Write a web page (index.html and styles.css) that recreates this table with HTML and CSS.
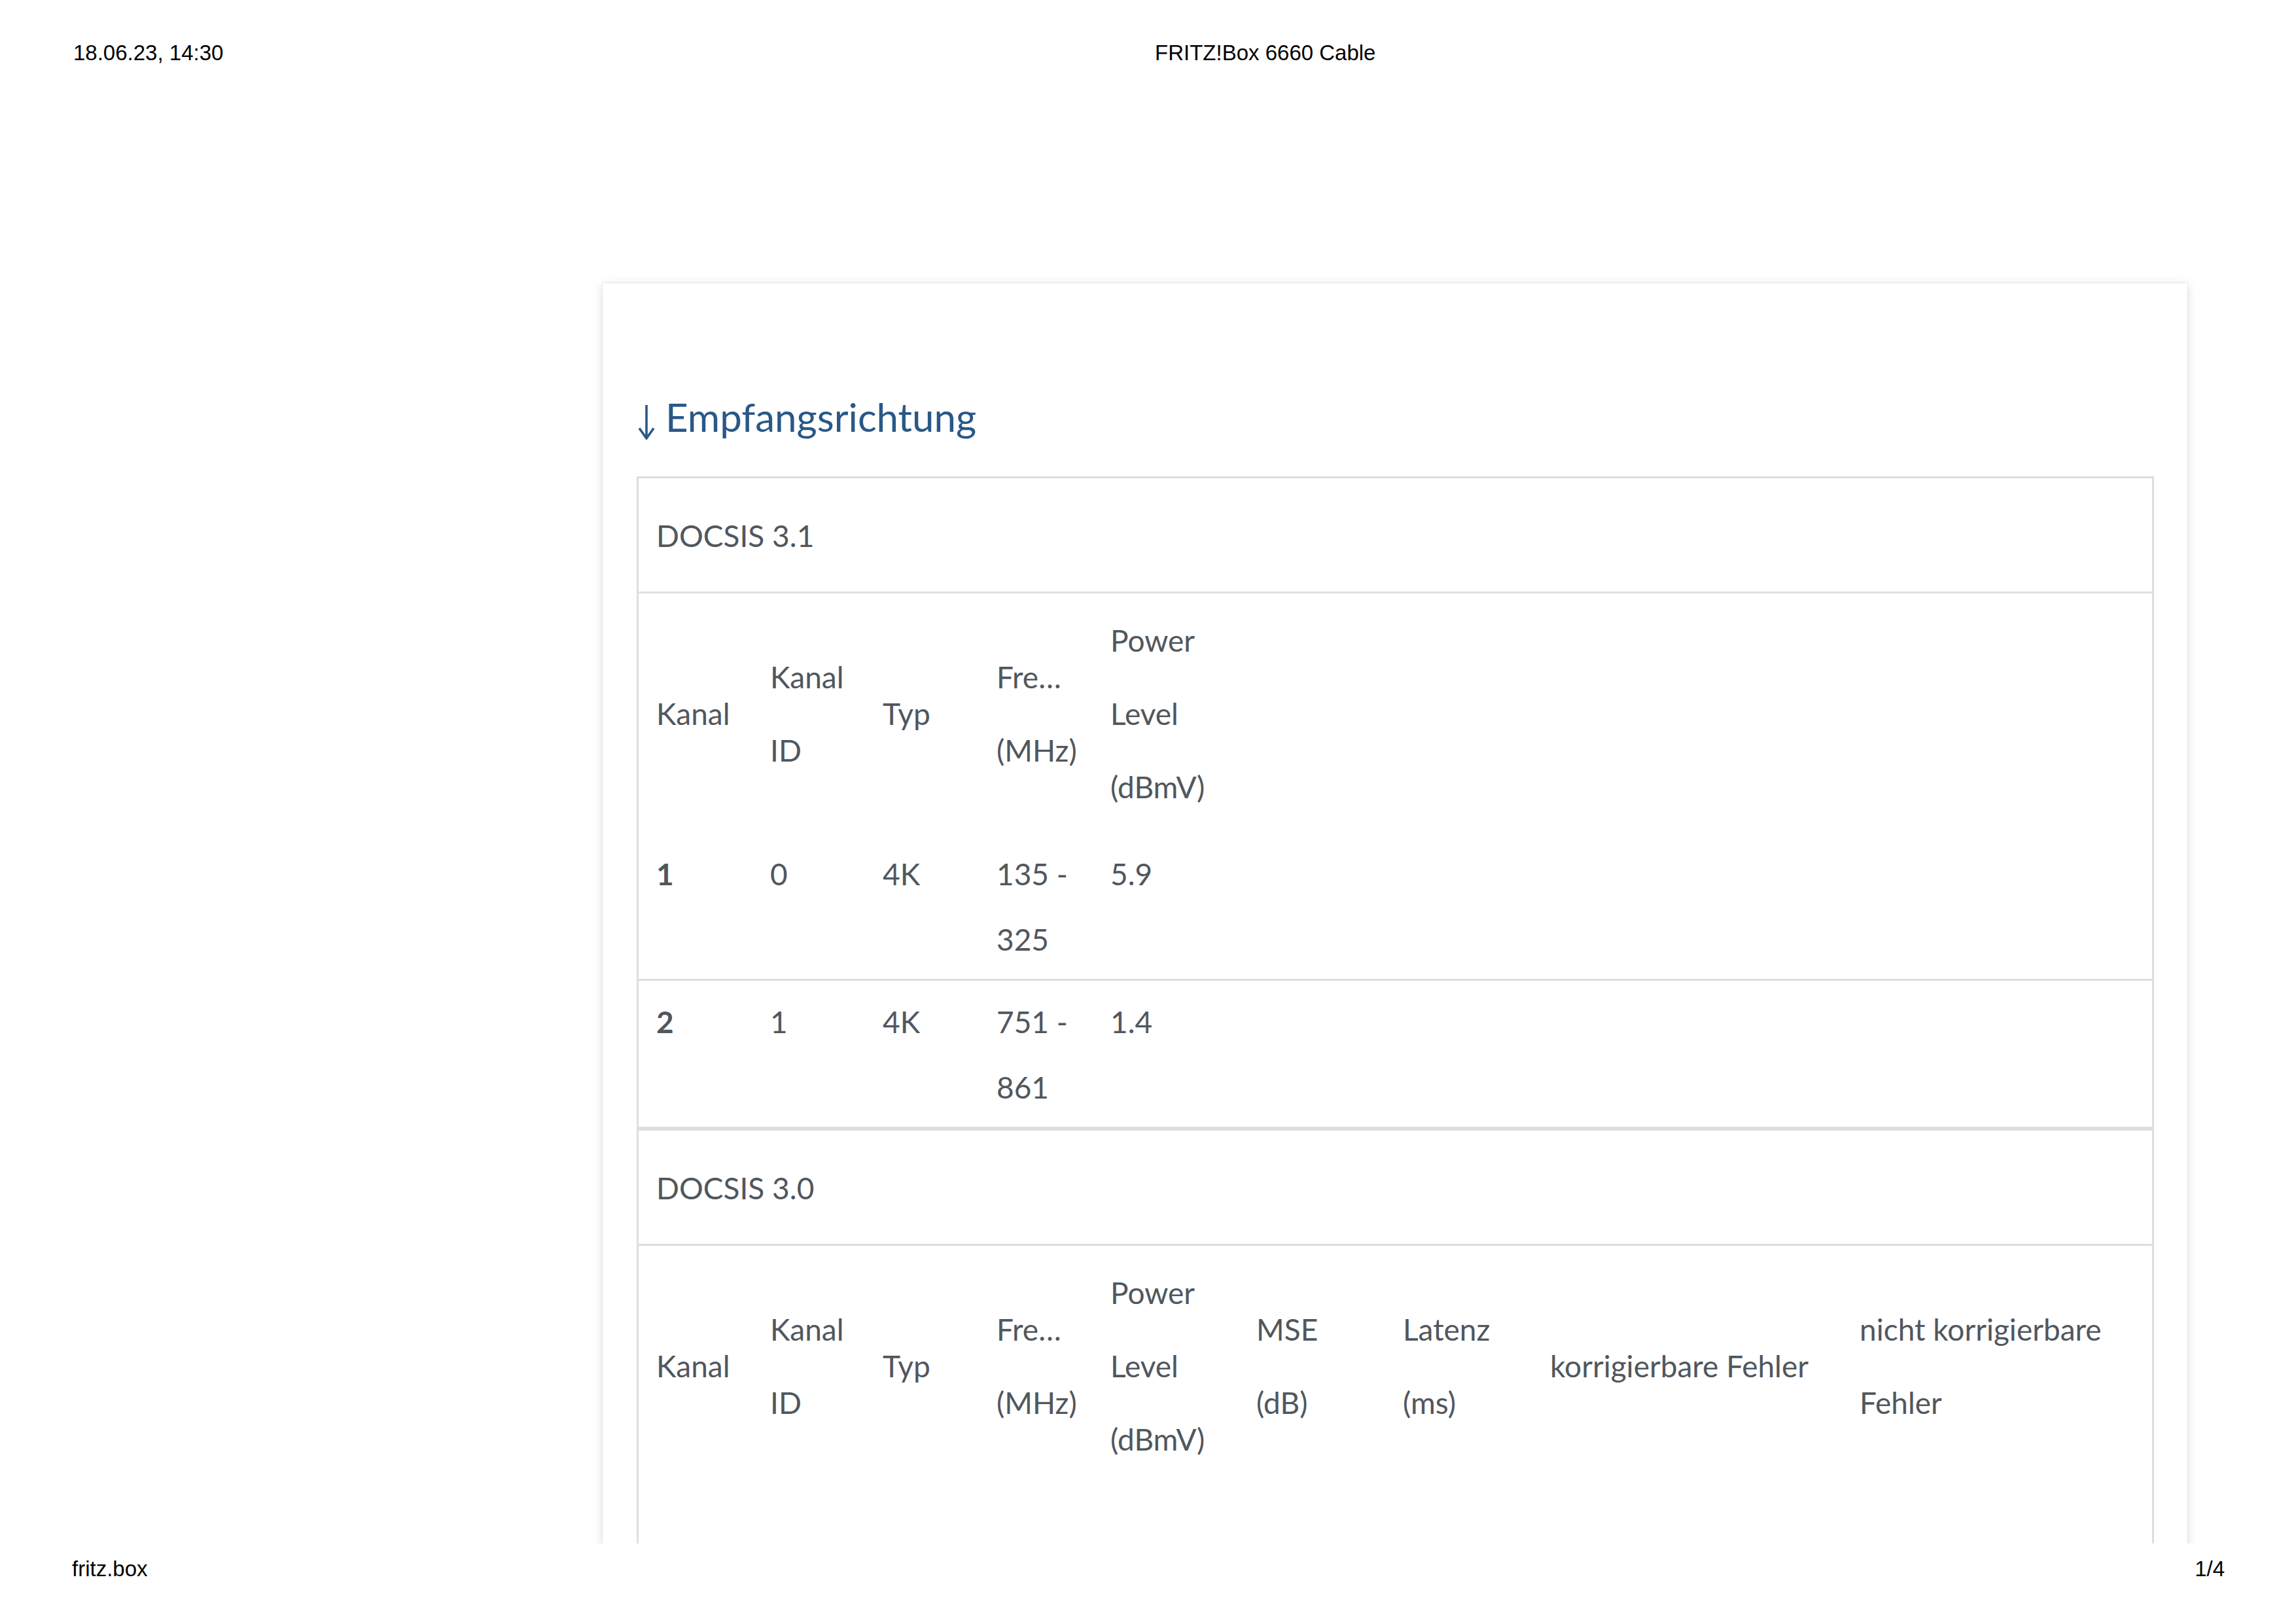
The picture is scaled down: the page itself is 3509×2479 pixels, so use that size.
FILE: index.html
```html
<!DOCTYPE html>
<html lang="de">
<head>
<meta charset="utf-8">
<title>FRITZ!Box 6660 Cable</title>
<link rel="stylesheet" href="styles.css">
</head>
<body>
<header class="print-head">
  <span class="print-date">18.06.23, 14:30</span>
  <span class="print-title">FRITZ!Box 6660 Cable</span>
</header>

<main class="viewport">
  <section class="card">
    <h2 class="section-title"><svg class="arrow" width="26" height="54" viewBox="0 0 26 54" aria-hidden="true"><path d="M13 1 V51" fill="none" stroke="currentColor" stroke-width="3.6"/><path d="M2 36.5 L13 52 L24 36.5" fill="none" stroke="currentColor" stroke-width="3.6" stroke-linejoin="miter"/></svg>Empfangsrichtung</h2>

    <div class="box">
      <div class="box-title">DOCSIS 3.1</div>
      <table class="chan">
        <colgroup>
          <col class="w-kanal"><col class="w-id"><col class="w-typ"><col class="w-freq"><col>
        </colgroup>
        <thead>
          <tr>
            <th>Kanal</th>
            <th>Kanal ID</th>
            <th>Typ</th>
            <th><span class="trunc">Frequenz</span><span class="blk">(MHz)</span></th>
            <th><span class="narrow">Power Level (dBmV)</span></th>
          </tr>
        </thead>
        <tbody>
          <tr>
            <td class="num">1</td><td>0</td><td>4K</td><td>135 - 325</td><td>5.9</td>
          </tr>
          <tr>
            <td class="num">2</td><td>1</td><td>4K</td><td>751 - 861</td><td>1.4</td>
          </tr>
        </tbody>
      </table>
    </div>

    <div class="box box-last">
      <div class="box-title">DOCSIS 3.0</div>
      <table class="chan">
        <colgroup>
          <col class="w-kanal"><col class="w-id"><col class="w-typ"><col class="w-freq"><col class="w-pow"><col class="w-mse"><col class="w-lat"><col class="w-korr"><col>
        </colgroup>
        <thead>
          <tr>
            <th>Kanal</th>
            <th>Kanal ID</th>
            <th>Typ</th>
            <th><span class="trunc">Frequenz</span><span class="blk">(MHz)</span></th>
            <th>Power Level (dBmV)</th>
            <th>MSE (dB)</th>
            <th>Latenz (ms)</th>
            <th>korrigierbare Fehler</th>
            <th>nicht korrigierbare Fehler</th>
          </tr>
        </thead>
      </table>
    </div>
  </section>
</main>

<footer class="print-foot">
  <span>fritz.box</span>
  <span>1/4</span>
</footer>
</body>
</html>
```

FILE: styles.css
```css
html, body {
  margin: 0;
  padding: 0;
  background: #ffffff;
}

body {
  width: 3509px;
  height: 2479px;
  overflow: hidden;
  font-family: "Lato", "Open Sans", sans-serif;
}

/* print header / footer */
.print-head {
  display: flex;
  height: 38px;
  padding: 62px 0 0 112px;
  font-family: "Liberation Sans", Arial, sans-serif;
  font-size: 33px;
  line-height: 38px;
  color: #000;
}

.print-date {
  width: 1653px;
}

.print-foot {
  display: flex;
  justify-content: space-between;
  height: 38px;
  margin-top: 20px;
  padding: 0 109px 0 110px;
  font-family: "Liberation Sans", Arial, sans-serif;
  font-size: 33px;
  line-height: 38px;
  color: #000;
}

/* page content area */
.viewport {
  height: 2259px;
  overflow: hidden;
}

.card {
  box-sizing: border-box;
  width: 2422px;
  min-height: 2600px;
  margin: 333px 0 0 921px;
  padding: 168px 51px 0 52px;
  background: #fff;
  box-shadow: 0 0 3px rgba(0, 0, 0, 0.10), 0 2px 14px rgba(0, 0, 0, 0.13);
}

.section-title {
  margin: 0 0 55px 2px;
  font-family: "Lato", sans-serif;
  font-weight: 400;
  font-size: 60px;
  line-height: 72px;
  color: #2a5887;
}

.arrow {
  vertical-align: -12px;
  margin-right: 16px;
  color: #2a5887;
}

/* boxes with channel tables */
.box {
  border: 3px solid #dedede;
  border-bottom: 0;
  color: #50575e;
  font-size: 46px;
}

.box-last {
  min-height: 900px;
}

.box-title {
  padding: 32px 27px 29px;
  line-height: 112px;
  border-bottom: 3px solid #dedede;
}

.chan {
  width: 100%;
  border-collapse: collapse;
  table-layout: fixed;
}

.w-kanal { width: 174px; }
.w-id    { width: 172px; }
.w-typ   { width: 174px; }
.w-freq  { width: 174px; }
.w-pow   { width: 223px; }
.w-mse   { width: 224px; }
.w-lat   { width: 225px; }
.w-korr  { width: 473px; }

.chan th {
  padding: 16px 20px 14px 27px;
  font-weight: 400;
  line-height: 112px;
  text-align: left;
  vertical-align: middle;
}

.chan td {
  padding: 13px 20px 10px 27px;
  line-height: 100px;
  vertical-align: top;
}

.chan tbody tr {
  border-bottom: 3px solid #dedede;
}

.chan td.num {
  font-weight: 700;
}

.trunc {
  display: block;
  max-width: 112px;
  overflow: hidden;
  white-space: nowrap;
  text-overflow: ellipsis;
}

.blk {
  display: block;
}

.narrow {
  display: block;
  max-width: 180px;
}
```
